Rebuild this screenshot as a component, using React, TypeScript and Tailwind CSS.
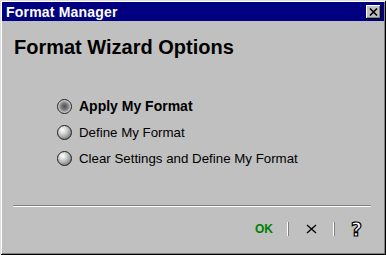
import React from "react";

function Radio({ selected }: { selected?: boolean }) {
  return (
    <div
      className={
        "w-[15px] h-[15px] rounded-full border border-[#202020] shrink-0 " +
        (selected
          ? "bg-[radial-gradient(circle_at_50%_50%,#505050_0%,#808080_40%,#e8e8e8_78%,#6a6a6a_100%)]"
          : "bg-[radial-gradient(circle_at_35%_30%,#ffffff_0%,#d8d8d8_30%,#909090_70%,#404040_100%)]")
      }
    />
  );
}

export default function App() {
  return (
    <div
      className="w-[386px] h-[255px] bg-[#c0c0c0] p-[2px] flex flex-col shadow-[inset_1px_1px_#dfdfdf,inset_-1px_-1px_#000000,inset_2px_2px_#ffffff,inset_-2px_-2px_#808080]"
      style={{ fontFamily: '"Liberation Sans", Arial, sans-serif' }}
    >
      <div className="h-[19px] bg-[#000080] flex items-center justify-between pl-[4px] pr-[3px]">
        <span className="text-white font-bold text-[14px] leading-none tracking-[0.2px]">Format Manager</span>
        <div className="w-[15px] h-[14px] bg-[#c0c0c0] flex items-center justify-center shadow-[inset_-1px_-1px_#000000,inset_1px_1px_#ffffff,inset_-2px_-2px_#808080]">
          <svg width="9" height="8" viewBox="0 0 9 8">
            <path d="M1 0.5 L8 7.5 M8 0.5 L1 7.5" stroke="#000" strokeWidth="1.6" />
          </svg>
        </div>
      </div>
      <div className="pl-[12px] pt-[15px]">
        <h1 className="font-bold text-[20px] leading-[22px] text-black">Format Wizard Options</h1>
      </div>
      <div className="flex flex-col gap-[11px] pl-[55px] pt-[41px]">
        <div className="flex items-center gap-[7px] h-[15px]">
          <Radio selected />
          <span className="font-bold text-[14px] text-black">Apply My Format</span>
        </div>
        <div className="flex items-center gap-[7px] h-[15px]">
          <Radio />
          <span className="text-[13.3px] text-black">Define My Format</span>
        </div>
        <div className="flex items-center gap-[7px] h-[15px]">
          <Radio />
          <span className="text-[13.3px] text-black">Clear Settings and Define My Format</span>
        </div>
      </div>
      <div className="mt-[39px] ml-[11px] w-[358px] h-[2px] border-t border-[#808080] border-b border-b-white" />
      <div className="flex items-center justify-end pr-[22px] mt-[14px] h-[16px]">
        <span className="text-[#008000] font-bold text-[12px] leading-none">OK</span>
        <div className="ml-[14px] w-[2px] h-[14px] border-l border-white border-r border-r-[#808080]" />
        <svg className="ml-[17px]" width="11" height="10" viewBox="0 0 11 10">
          <path d="M1 1 L10 9 M10 1 L1 9" stroke="#000" strokeWidth="1.3" />
        </svg>
        <div className="ml-[16px] w-[2px] h-[14px] border-l border-white border-r border-r-[#808080]" />
        <span
          className="ml-[16px] text-white font-bold text-[19px] leading-none"
          style={{ WebkitTextStroke: "1.2px #000", fontFamily: '"DejaVu Sans", sans-serif' }}
        >
          ?
        </span>
      </div>
    </div>
  );
}
